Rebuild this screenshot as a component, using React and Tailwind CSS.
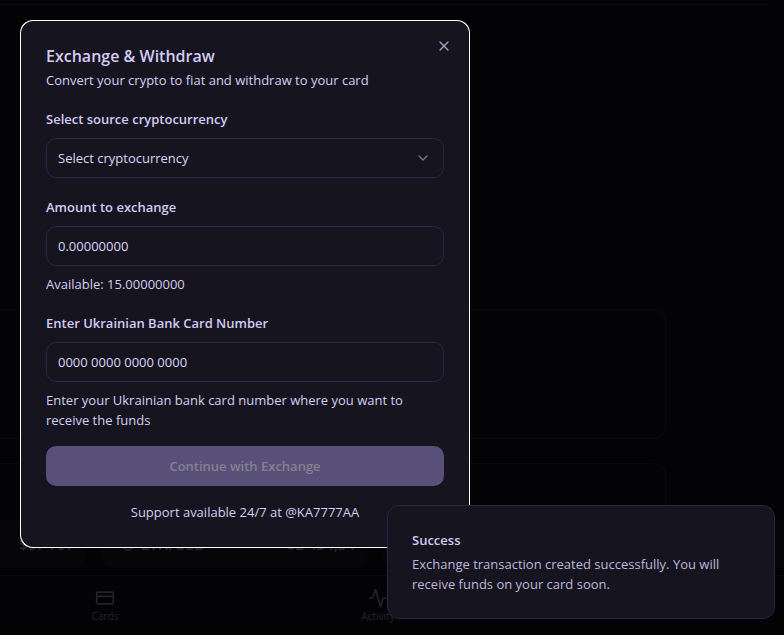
import { Activity, ChevronDown, CreditCard, X } from "lucide-react";

const fieldClass =
  "block h-10 w-full rounded-[10px] border border-[#2a2350] bg-transparent px-[11px] text-[13px] text-[#dcd6f7] placeholder:text-[#dcd6f7] placeholder:opacity-100 outline-none";
const labelClass = "mb-[7px] block pt-px text-[13px] leading-6 font-semibold text-[#d3cbf5]";

function Backdrop() {
  return (
    <div aria-hidden="true" className="flex h-screen flex-col justify-between overflow-hidden">
      <div className="mr-[15px] h-[5px] border-b border-[#090714]" />
      <div className="flex flex-col">
        <div className="mr-[118px] flex flex-col gap-6">
          <div className="h-[130px] rounded-r-xl border border-l-0 border-[#0a090d]" />
          <div className="h-[57px] rounded-tr-xl border border-b-0 border-l-0 border-[#0a090d]" />
        </div>
        <div className="mb-[7px] flex h-12 gap-4 text-[15px] font-semibold text-[#2a2a30]">
          <div className="flex w-[85px] items-center rounded-r-xl bg-[#060609] pl-[19px]">$67 797</div>
          <div className="flex w-[266px] items-center rounded-xl bg-[#060609] pr-3 pl-5">
            <span className="mr-[6px] size-[14px] rounded-full border-2 border-[#0a2140]" />
            <span>ETH/USD</span>
            <span className="ml-auto">$2 434,34</span>
          </div>
          <div className="flex-1 rounded-l-xl bg-[#060609]" />
        </div>
        <nav className="grid h-[60px] grid-cols-[210fr_336fr_238fr] border-t border-[#0a090d] pt-3 text-[10px] leading-4 text-[#24232b]">
          <div className="flex flex-col items-center">
            <CreditCard size={20} />
            <span>Cards</span>
          </div>
          <div className="flex flex-col items-center">
            <Activity size={20} />
            <span>Activity</span>
          </div>
        </nav>
      </div>
    </div>
  );
}

function ExchangeDialog() {
  return (
    <section
      role="dialog"
      aria-labelledby="dialog-title"
      className="absolute top-[21px] left-[21px] w-[448px] max-w-[calc(100%-42px)] rounded-xl border border-[#13121a] bg-[#16141e] p-6 text-[13px] leading-5 text-[#d5cef3] ring-1 ring-white"
    >
      <h2 id="dialog-title" className="text-base leading-5 font-semibold text-[#d3cbf5]">
        Exchange &amp; Withdraw
      </h2>
      <p className="mt-1">Convert your crypto to fiat and withdraw to your card</p>
      <button type="button" aria-label="Close" className="absolute top-4 right-4 text-[#a39dbd]">
        <X size={16} />
      </button>

      <form className="mt-4 flex flex-col gap-4">
        <div>
          <label htmlFor="source" className={labelClass}>Select source cryptocurrency</label>
          <div className="relative">
            <select id="source" className={`${fieldClass} appearance-none`}>
              <option>Select cryptocurrency</option>
            </select>
            <ChevronDown size={16} className="pointer-events-none absolute top-3 right-[13px] text-[#77728b]" />
          </div>
        </div>
        <div>
          <label htmlFor="amount" className={labelClass}>Amount to exchange</label>
          <input id="amount" placeholder="0.00000000" className={fieldClass} />
          <p className="mt-2">Available: 15.00000000</p>
        </div>
        <div>
          <label htmlFor="card" className={labelClass}>Enter Ukrainian Bank Card Number</label>
          <input id="card" placeholder="0000 0000 0000 0000" className={fieldClass} />
          <p className="mt-2">Enter your Ukrainian bank card number where you want to receive the funds</p>
        </div>
        <button type="submit" disabled className="h-10 rounded-[10px] bg-[#59507a] font-semibold text-[#85828d]">
          Continue with Exchange
        </button>
        <p className="text-center">Support available 24/7 at @KA7777AA</p>
      </form>
    </section>
  );
}

function Toast() {
  return (
    <div
      role="status"
      className="absolute right-[9px] bottom-4 w-[388px] max-w-[calc(100%-18px)] rounded-xl border border-[#2a2350] bg-[#16141e] p-6 text-[13px] leading-5"
    >
      <p className="font-semibold text-[#d3cbf5]">Success</p>
      <p className="mt-1 text-[#bfb8dc]">
        Exchange transaction created successfully. You will receive funds on your card soon.
      </p>
    </div>
  );
}

export default function App() {
  return (
    <main className="relative min-h-screen bg-[#030305] font-['Open_Sans','Noto_Sans',sans-serif]">
      <Backdrop />
      <ExchangeDialog />
      <Toast />
    </main>
  );
}
